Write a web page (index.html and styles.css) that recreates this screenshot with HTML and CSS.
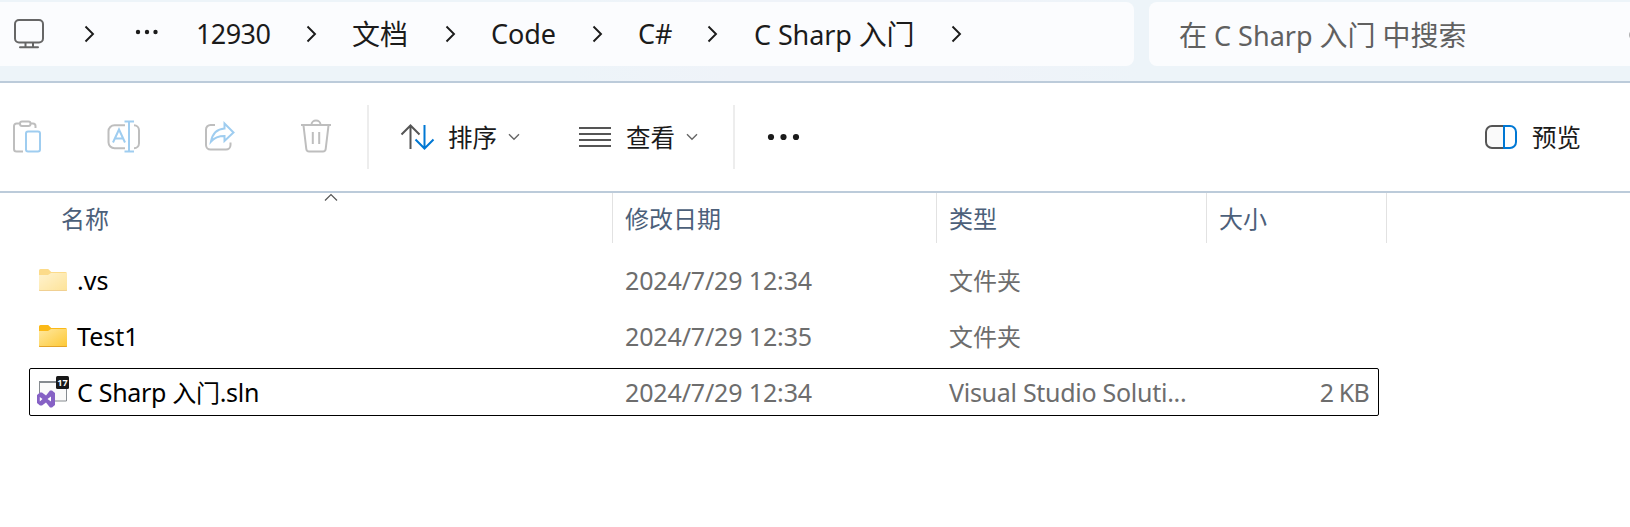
FILE: index.html
```html
<!DOCTYPE html>
<html lang="zh-CN">
<head>
<meta charset="utf-8">
<title>C Sharp 入门</title>
<link rel="stylesheet" href="styles.css">
</head>
<body>
<header class="topbar">
  <nav class="address">
    <svg class="monitor" width="32" height="32" viewBox="0 0 32 32"><rect x="2" y="2" width="28" height="22.500" rx="4"/><path d="M12.500 25v4M20 25v4M7 29.200h18"/></svg>
    <svg class="chev" width="12" height="18" viewBox="0 0 12 18"><path d="M1.500 1.500 9 9l-7.500 7.500"/></svg>
    <svg class="dots" width="24" height="6" viewBox="0 0 24 6"><circle cx="3" cy="3" r="2.200"/><circle cx="12" cy="3" r="2.200"/><circle cx="20.500" cy="3" r="2.200"/></svg>
    <span class="crumb crumb-num">12930</span>
    <svg class="chev" width="12" height="18" viewBox="0 0 12 18"><path d="M1.500 1.500 9 9l-7.500 7.500"/></svg>
    <span class="crumb"><span class="han">文档</span></span>
    <svg class="chev" width="12" height="18" viewBox="0 0 12 18"><path d="M1.500 1.500 9 9l-7.500 7.500"/></svg>
    <span class="crumb">Code</span>
    <svg class="chev" width="12" height="18" viewBox="0 0 12 18"><path d="M1.500 1.500 9 9l-7.500 7.500"/></svg>
    <span class="crumb">C#</span>
    <svg class="chev" width="12" height="18" viewBox="0 0 12 18"><path d="M1.500 1.500 9 9l-7.500 7.500"/></svg>
    <span class="crumb">C Sharp <span class="han">入门</span></span>
    <svg class="chev" width="12" height="18" viewBox="0 0 12 18"><path d="M1.500 1.500 9 9l-7.500 7.500"/></svg>
  </nav>
  <div class="search">
    <span class="placeholder"><span class="han">在</span> C Sharp <span class="han">入门</span> <span class="han">中搜索</span></span>
    <svg class="magnifier" width="20" height="20" viewBox="0 0 20 20"><circle cx="10" cy="10" r="8.500"/></svg>
  </div>
</header>
<div class="toolbar">
  <div class="actions">
    <svg width="36" height="36" viewBox="0 0 36 36"><g class="off"><path d="M10 4.500H6.500a2.500 2.500 0 0 0-2.500 2.500v23a2.500 2.500 0 0 0 2.500 2.500H13M20.500 4.500H23a2.500 2.500 0 0 1 2.500 2.500v2"/><rect x="10" y="2.500" width="10.500" height="4.500" rx="2"/></g><rect class="off-blue" x="16" y="12.500" width="14" height="20" rx="2"/></svg>
    <svg width="36" height="36" viewBox="0 0 36 36"><path class="off" d="M19 6.200H8.500a6 6 0 0 0-6 6v11a6 6 0 0 0 6 6H19M28 6.200a5 5 0 0 1 5 5v13a5 5 0 0 1-5 5"/><path class="off-blue" d="M18.500 2.500h9.500M18.500 32.500h9.500M23 2.500v30M7 23.500l6-13 6 13M9.200 19.500h7.600"/></svg>
    <svg width="36" height="36" viewBox="0 0 36 36"><path class="off" d="M13 6H8.500a4.500 4.500 0 0 0-4.500 4.500v15.500a4.500 4.500 0 0 0 4.500 4.500h15.500a4.500 4.500 0 0 0 4.500-4.500V23.500"/><path class="off-blue" d="M22.500 4.500 31.500 13.500l-9 8.500v-5c-6 0-10 1.500-13.500 5.500 1.500-8 6-12.500 13.500-13z"/></svg>
    <svg width="36" height="36" viewBox="0 0 36 36"><path class="off" d="M3 6h30M13.500 5.500a4.500 4 0 0 1 9 0M5.500 6.500l2.800 23.500a2.800 2.800 0 0 0 2.800 2.500h13.800a2.800 2.800 0 0 0 2.800-2.500L30.500 6.500M14.800 13v12M21.200 13v12"/></svg>
  </div>
  <div class="menus">
    <button class="tool"><svg width="34" height="26" viewBox="0 0 34 26"><path class="dark" d="M10.500 25V2M1.500 10.500 10.500 1.500l9 9"/><path class="blue" d="M24.500 1v23M15.500 15.500l9 9 9-9"/></svg><span class="label">排序</span><svg class="down" width="12" height="8" viewBox="0 0 12 8"><path d="m1 1.200 5 5 5-5"/></svg></button>
    <button class="tool"><svg width="34" height="26" viewBox="0 0 34 26"><path class="dark" d="M1 4h32M1 10h32M1 16h32M1 22h32"/></svg><span class="label">查看</span><svg class="down" width="12" height="8" viewBox="0 0 12 8"><path d="m1 1.200 5 5 5-5"/></svg></button>
  </div>
  <svg class="more" width="34" height="8" viewBox="0 0 34 8"><circle cx="4" cy="4" r="3.100"/><circle cx="16.500" cy="4" r="3.100"/><circle cx="29" cy="4" r="3.100"/></svg>
  <button class="tool preview"><svg width="34" height="26" viewBox="0 0 34 26"><path class="dark" fill="#fafafa" d="M20 2H8a6 6 0 0 0-6 6v10a6 6 0 0 0 6 6h12"/><path class="blue" d="M20 2h6a6 6 0 0 1 6 6v10a6 6 0 0 1-6 6h-6z"/></svg><span class="label">预览</span></button>
</div>
<main class="list">
  <div class="head">
    <span class="col">名称<svg class="caret" width="14" height="9" viewBox="0 0 14 9"><path d="m1 7.500 6-6 6 6"/></svg></span>
    <span class="col">修改日期</span>
    <span class="col">类型</span>
    <span class="col">大小</span>
  </div>
  <div class="row">
    <span class="name"><svg class="icon faded" width="32" height="32" viewBox="0 0 32 32"><use href="#folder"/></svg>.vs</span>
    <span class="date">2024/7/29 12:34</span><span class="type han">文件夹</span><span class="size"></span>
  </div>
  <div class="row">
    <span class="name"><svg class="icon" width="32" height="32" viewBox="0 0 32 32">
      <defs><linearGradient id="paper" x1="0" y1="0" x2="1" y2="1"><stop offset="0" stop-color="#ffe8a0"/><stop offset="1" stop-color="#fdc834"/></linearGradient></defs>
      <g id="folder"><path fill="#fbb917" d="M2 6.500A1.500 1.500 0 0 1 3.500 5h7.700l3 3H28.500A1.500 1.500 0 0 1 30 9.500V27H2z"/><path fill="url(#paper)" d="M2 11h9l3-2h16v16.500a1.500 1.500 0 0 1-1.500 1.500h-25A1.500 1.500 0 0 1 2 25.500z"/><path fill="#e3a329" d="M2 25.500a1.500 1.500 0 0 0 1.500 1.500h25a1.500 1.500 0 0 0 1.500-1.500q-.5.500-1.500.5h-25q-1 0-1.500-.5z"/></g></svg>Test1</span>
    <span class="date">2024/7/29 12:35</span><span class="type han">文件夹</span><span class="size"></span>
  </div>
  <div class="row focused">
    <span class="name"><svg class="icon" width="32" height="32" viewBox="0 0 32 32"><path fill="#fafafa" d="M2 5h28v20H2z"/><path fill="none" stroke="#868b90" d="M2.500 17V5M29.500 13v12H18"/><path stroke="#868b90" stroke-width="2" d="M2 6h17"/><path fill="#8661c5" d="m0 19 3-2.500h2l4 3 4-5h2l3 2.500v12l-3 2.500h-2l-4-5-4 3H3L0 27z"/><path fill="#fff" d="M2.800 21v4.500L5.500 23zM14 20.500v5L10.500 23z"/><rect x="19" y="0" width="13" height="13" rx="1.500" fill="#181818"/><text class="badge" x="25.500" y="9.500">17</text></svg><span class="file">C Sharp <span class="han">入门</span>.sln</span></span>
    <span class="date">2024/7/29 12:34</span><span class="type">Visual Studio Soluti...</span><span class="size">2 KB</span>
  </div>
</main>
</body>
</html>
```

FILE: styles.css
```css
* { box-sizing: border-box; }
body {
  margin: 0;
  width: 1630px;
  height: 527px;
  overflow: hidden;
  background: #fff;
  color: #1b1b1b;
  font-family: "Noto Sans", "Noto Sans CJK SC", sans-serif;
}
svg { display: block; flex: none; fill: none; overflow: visible; }

.topbar {
  display: flex;
  gap: 15px;
  height: 83px;
  padding-top: 2px;
  background: linear-gradient(90deg, #edf4f9 0, #edf4f9 35%, #eff3f9 45%, #eff3f9 60%, #edf4f9 70%);
  border-bottom: 2px solid #bccbda;
}
.address {
  display: grid;
  grid-template-columns: 71px 51px 61px 110px 46px 93px 46px 101px 46px 69px 47px 197px 12px;
  align-items: center;
  flex: none;
  width: 1134px;
  height: 64px;
  padding-left: 13px;
  background: #fbfcfe;
  border-radius: 0 8px 8px 0;
}
.monitor { stroke: #666; stroke-width: 2; stroke-linecap: round; }
.chev { stroke: #1b1b1b; stroke-width: 1.900; }
.dots { fill: #1b1b1b; margin-bottom: 4px; }
.crumb { font-size: 27px; line-height: 36px; white-space: nowrap; letter-spacing: -0.100px; }
.crumb-num { letter-spacing: -0.600px; }
.han { font-family: "Noto Sans CJK SC", sans-serif; }
.crumb .han, .placeholder .han { font-size: 28px; line-height: 34px; }
.search {
  display: flex;
  align-items: center;
  justify-content: space-between;
  flex: none;
  width: 500px;
  height: 64px;
  padding: 2px 0 0 30px;
  background: #fbfcfe;
  border-radius: 8px;
}
.placeholder { color: #606060; font-size: 27px; line-height: 36px; white-space: nowrap; }
.magnifier { stroke: #606060; stroke-width: 2; }

.toolbar {
  display: flex;
  align-items: center;
  height: 110px;
  border-bottom: 2px solid #bccbda;
}
.actions { display: flex; gap: 60px; width: 367px; padding-left: 10px; }
.off { stroke: #bebebe; stroke-width: 2; }
.off-blue { stroke: #9fcdf0; stroke-width: 2; }
.menus {
  display: flex;
  gap: 58px;
  width: 368px;
  height: 64px;
  padding-left: 31px;
  border: solid #ededed;
  border-width: 0 2px;
}
.tool {
  display: flex;
  align-items: center;
  padding: 0;
  border: 0;
  background: none;
  color: #1b1b1b;
  font: 24.500px/32px "Noto Sans CJK SC", sans-serif;
}
.label { margin: 0 11px 0 14px; }
.dark { stroke: #555; stroke-width: 2; }
.blue { stroke: #0078d4; stroke-width: 2; }
.down { stroke: #666; stroke-width: 1.400; }
.more { margin-left: 32px; fill: #1b1b1b; }
.preview { margin-left: 683px; }

.head {
  display: grid;
  grid-template-columns: 613px 324px 270px 180px;
  height: 50px;
  margin-bottom: 13px;
  color: #4c607a;
  font: 24px/32px "Noto Sans CJK SC", sans-serif;
}
.col { position: relative; padding: 9px 0 0 12px; border-right: 1px solid #e2e2e2; }
.col:first-child { padding-left: 61px; }
.caret { position: absolute; top: 0; left: 324px; stroke: #555; stroke-width: 1.200; }
.row {
  display: grid;
  grid-template-columns: 595px 324px 270px 150px;
  align-items: center;
  width: 1350px;
  height: 48px;
  margin: 0 0 8px 29px;
  border: 1px solid transparent;
  border-radius: 2px;
  color: #6d6d6d;
  font-size: 25px;
  line-height: 34px;
  white-space: nowrap;
}
.focused { border-color: #000; }
.name { display: flex; align-items: center; color: #000; white-space: pre; }
.file { letter-spacing: -0.300px; }
.file .han { font-size: 24px; line-height: 32px; }
.date { letter-spacing: -0.140px; }
.type { letter-spacing: -0.280px; }
.icon { margin: 0 8px 0 7px; }
.faded { opacity: 0.500; }
.type.han { font-size: 24px; letter-spacing: 0; }
.size { text-align: right; letter-spacing: -0.800px; }
.badge { fill: #fff; font: bold 9px "Noto Sans", sans-serif; text-anchor: middle; }
```
